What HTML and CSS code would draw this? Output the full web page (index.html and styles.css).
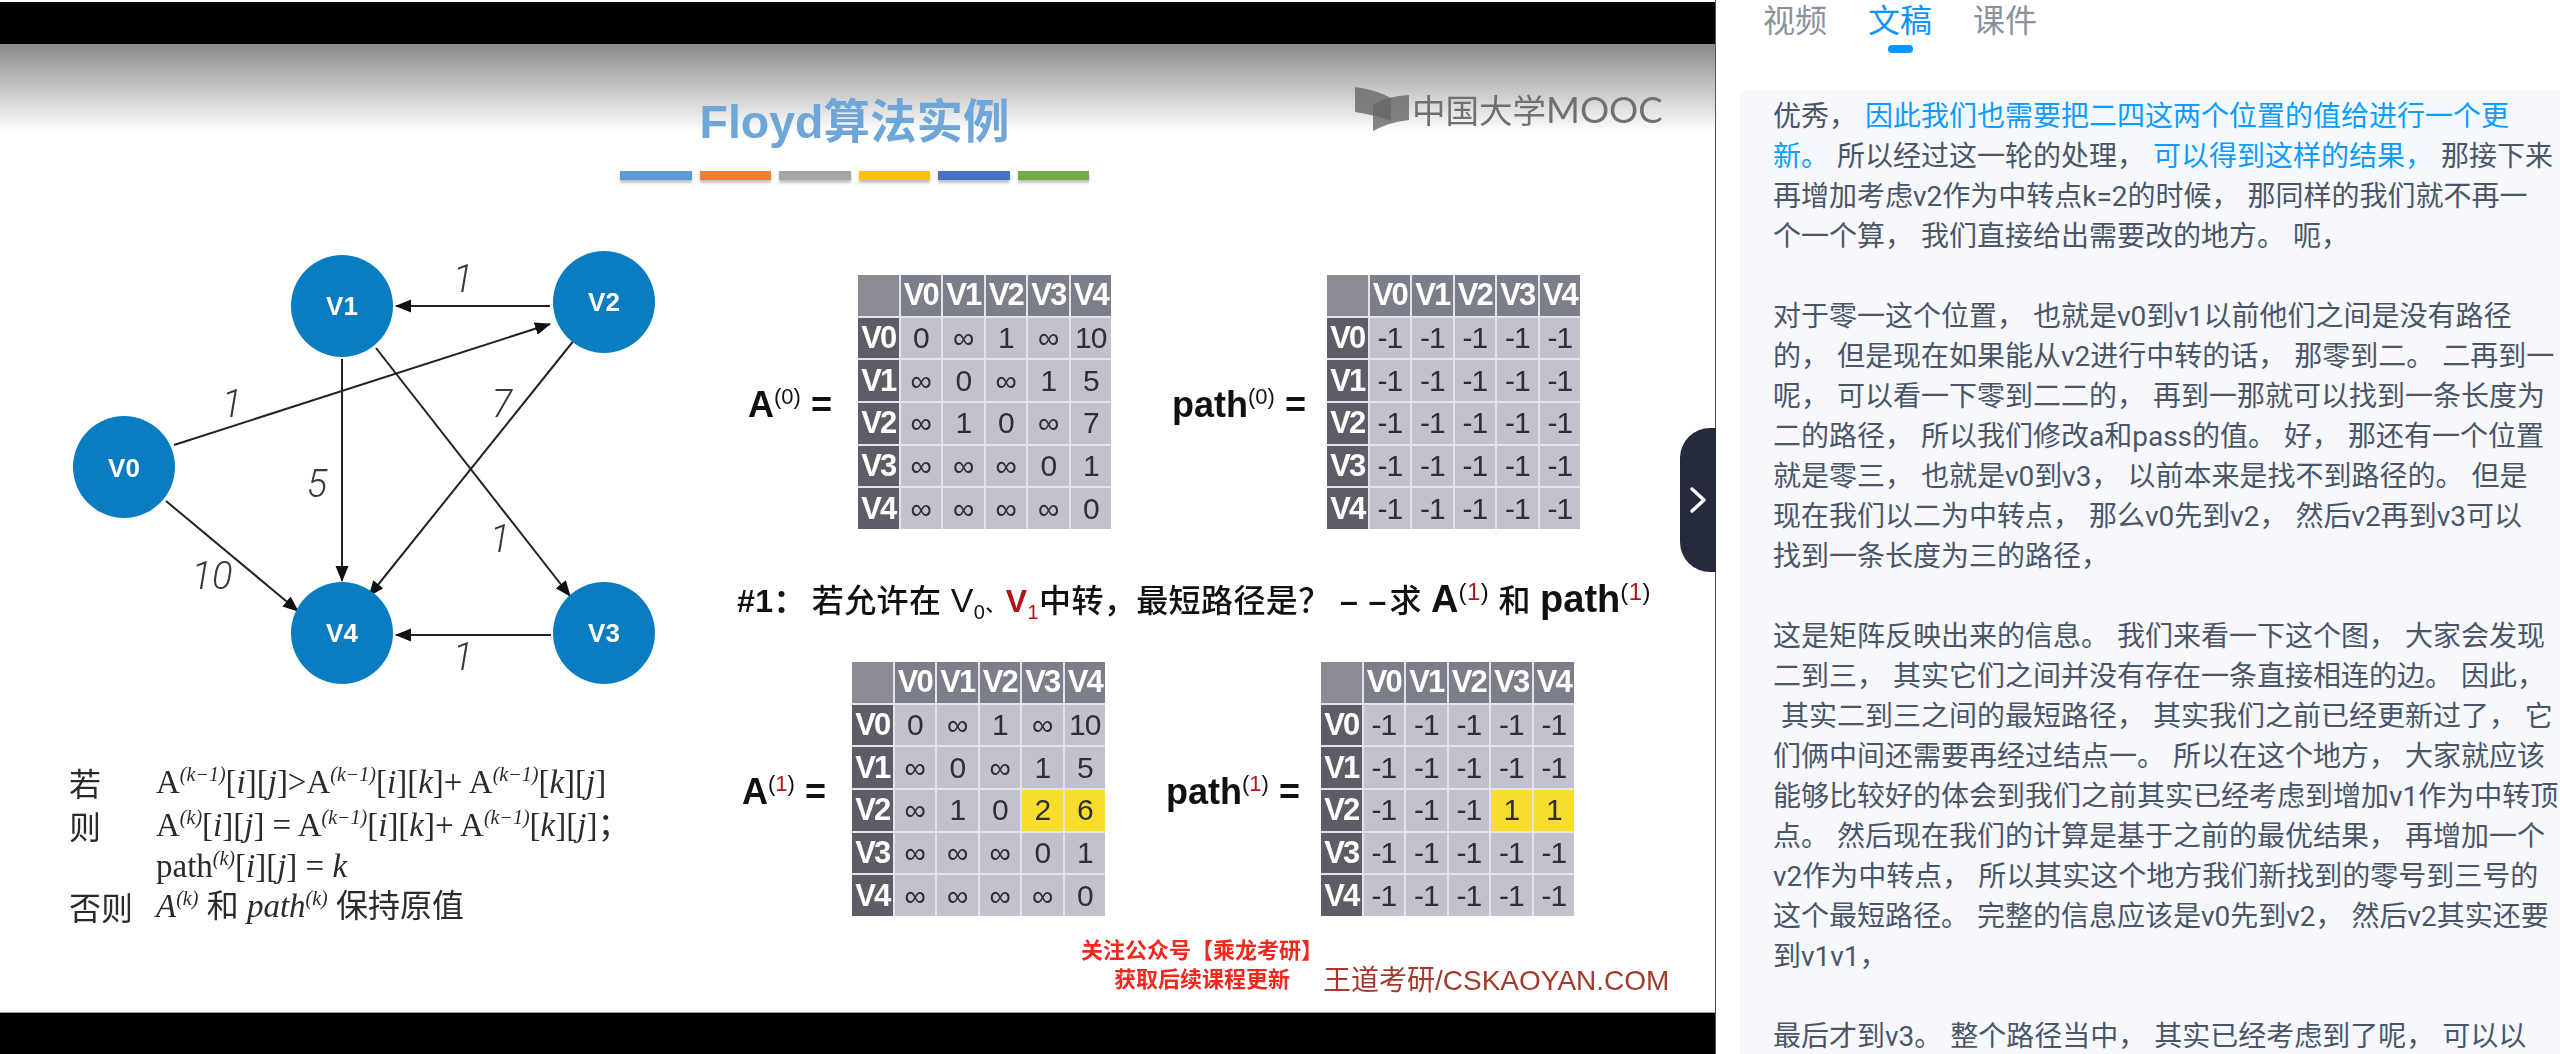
FILE: index.html
```html
<!DOCTYPE html>
<html lang="zh-CN">
<head>
<meta charset="utf-8">
<title>Floyd算法实例</title>
<link rel="stylesheet" href="styles.css">
</head>
<body>
<div class="app">
  <section class="video">
    <div class="bar-top"></div>
    <div class="slide">
      <header class="slide-head">
        <div class="title-block">
          <h1 class="title">Floyd算法实例</h1>
          <div class="dashes"><i class="d1"></i><i class="d2"></i><i class="d3"></i><i class="d4"></i><i class="d5"></i><i class="d6"></i></div>
        </div>
        <div class="logo">
          <svg class="logo-mark" width="54" height="44" viewBox="0 0 54 44"><path class="pg" d="M0 0Q22 3 36 11V34Q20 28 0 25Z"/><path class="pg" d="M18 18Q32 9 54 8V33Q34 35 18 44Z"/></svg>
          <span class="logo-text">中国大学<span class="logo-latin">MOOC</span></span>
        </div>
      </header>
      <div class="slide-body">
        <div class="left">
          <svg class="graph" width="720" height="460" viewBox="0 250 720 460">
            <defs><marker id="ah" markerUnits="userSpaceOnUse" markerWidth="16" markerHeight="14" refX="15" refY="6.5" orient="auto"><path class="head" d="M0 0L16 6.5L0 13Z"/></marker></defs>
            <g class="edges">
              <line x1="550" y1="306" x2="396" y2="306" marker-end="url(#ah)"/>
              <line x1="174" y1="445" x2="550" y2="324" marker-end="url(#ah)"/>
              <line x1="342" y1="359" x2="342" y2="581" marker-end="url(#ah)"/>
              <line x1="376" y1="348" x2="570" y2="596" marker-end="url(#ah)"/>
              <line x1="575" y1="339" x2="369" y2="596" marker-end="url(#ah)"/>
              <line x1="166" y1="501" x2="298" y2="611" marker-end="url(#ah)"/>
              <line x1="551" y1="635" x2="396" y2="635" marker-end="url(#ah)"/>
            </g>
            <g class="nodes">
              <circle cx="342" cy="306" r="51"/><circle cx="604" cy="302" r="51"/><circle cx="124" cy="467" r="51"/><circle cx="342" cy="633" r="51"/><circle cx="604" cy="633" r="51"/>
            </g>
            <g class="node-labels">
              <text x="342" y="315">V1</text><text x="604" y="311">V2</text><text x="124" y="477">V0</text><text x="342" y="642">V4</text><text x="604" y="642">V3</text>
            </g>
            <g class="weights">
              <text x="463" y="292">1</text><text x="232" y="417">1</text><text x="317" y="497">5</text><text x="502" y="417">7</text><text x="500" y="552">1</text><text x="212" y="589">10</text><text x="463" y="670">1</text>
            </g>
          </svg>
          <div class="formula">
            <span class="kw">若</span><span class="fx">A<sup><em>(k−1)</em></sup>[<em>i</em>][<em>j</em>]&gt;A<sup><em>(k−1)</em></sup>[<em>i</em>][<em>k</em>]+ A<sup><em>(k−1)</em></sup>[<em>k</em>][<em>j</em>]</span>
            <span class="kw">则</span><span class="fx">A<sup><em>(k)</em></sup>[<em>i</em>][<em>j</em>] = A<sup><em>(k−1)</em></sup>[<em>i</em>][<em>k</em>]+ A<sup><em>(k−1)</em></sup>[<em>k</em>][<em>j</em>]；</span>
            <span class="kw"></span><span class="fx">path<sup><em>(k)</em></sup>[<em>i</em>][<em>j</em>] = <em>k</em></span>
            <span class="kw">否则</span><span class="fx"><em>A<sup>(k)</sup></em> <span class="cjk">和</span> <em>path<sup>(k)</sup></em> <span class="cjk">保持原值</span></span>
          </div>
        </div>
        <div class="right">
          <div class="mrow">
            <div class="mlabel la">A<sup>(0)</sup> =</div>
            <div class="matrix"><span class="c"></span><span class="h">V0</span><span class="h">V1</span><span class="h">V2</span><span class="h">V3</span><span class="h">V4</span><span class="r">V0</span><span>0</span><span>∞</span><span>1</span><span>∞</span><span>10</span><span class="r">V1</span><span>∞</span><span>0</span><span>∞</span><span>1</span><span>5</span><span class="r">V2</span><span>∞</span><span>1</span><span>0</span><span>∞</span><span>7</span><span class="r">V3</span><span>∞</span><span>∞</span><span>∞</span><span>0</span><span>1</span><span class="r">V4</span><span>∞</span><span>∞</span><span>∞</span><span>∞</span><span>0</span></div>
            <div class="mlabel lp">path<sup>(0)</sup> =</div>
            <div class="matrix"><span class="c"></span><span class="h">V0</span><span class="h">V1</span><span class="h">V2</span><span class="h">V3</span><span class="h">V4</span><span class="r">V0</span><span>-1</span><span>-1</span><span>-1</span><span>-1</span><span>-1</span><span class="r">V1</span><span>-1</span><span>-1</span><span>-1</span><span>-1</span><span>-1</span><span class="r">V2</span><span>-1</span><span>-1</span><span>-1</span><span>-1</span><span>-1</span><span class="r">V3</span><span>-1</span><span>-1</span><span>-1</span><span>-1</span><span>-1</span><span class="r">V4</span><span>-1</span><span>-1</span><span>-1</span><span>-1</span><span>-1</span></div>
          </div>
          <p class="question"><b class="num">#1：</b>若允许在 <span class="vv">V</span><sub>0</sub><span class="dun">、</span><b class="red">V<sub>1</sub></b>中转，最短路径是？ <b class="dash">– –</b>求 <b class="big">A</b><sup>(<span class="red">1</span>)</sup> 和 <b class="big">path</b><sup>(<span class="red">1</span>)</sup></p>
          <div class="mrow second">
            <div class="mlabel la">A<sup>(<span class="red">1</span>)</sup> =</div>
            <div class="matrix"><span class="c"></span><span class="h">V0</span><span class="h">V1</span><span class="h">V2</span><span class="h">V3</span><span class="h">V4</span><span class="r">V0</span><span>0</span><span>∞</span><span>1</span><span>∞</span><span>10</span><span class="r">V1</span><span>∞</span><span>0</span><span>∞</span><span>1</span><span>5</span><span class="r">V2</span><span>∞</span><span>1</span><span>0</span><span class="y">2</span><span class="y">6</span><span class="r">V3</span><span>∞</span><span>∞</span><span>∞</span><span>0</span><span>1</span><span class="r">V4</span><span>∞</span><span>∞</span><span>∞</span><span>∞</span><span>0</span></div>
            <div class="mlabel lp">path<sup>(<span class="red">1</span>)</sup> =</div>
            <div class="matrix"><span class="c"></span><span class="h">V0</span><span class="h">V1</span><span class="h">V2</span><span class="h">V3</span><span class="h">V4</span><span class="r">V0</span><span>-1</span><span>-1</span><span>-1</span><span>-1</span><span>-1</span><span class="r">V1</span><span>-1</span><span>-1</span><span>-1</span><span>-1</span><span>-1</span><span class="r">V2</span><span>-1</span><span>-1</span><span>-1</span><span class="y">1</span><span class="y">1</span><span class="r">V3</span><span>-1</span><span>-1</span><span>-1</span><span>-1</span><span>-1</span><span class="r">V4</span><span>-1</span><span>-1</span><span>-1</span><span>-1</span><span>-1</span></div>
          </div>
          <div class="credits">
            <div class="promo"><div>关注公众号【乘龙考研】</div><div class="promo2">获取后续课程更新</div></div>
            <div class="brand">王道考研/CSKAOYAN.COM</div>
          </div>
        </div>
      </div>
    </div>
    <div class="bar-bottom"></div>
    <button class="toggle" aria-label="收起"><svg width="16" height="26" viewBox="0 0 16 26"><path d="M2 2L14 13L2 24"/></svg></button>
  </section>
  <aside class="panel">
    <nav class="tabs">
      <a class="tab">视频</a>
      <a class="tab active">文稿</a>
      <a class="tab">课件</a>
    </nav>
    <div class="transcript">
      <p>优秀， <span class="hl">因此我们也需要把二四这两个位置的值给进行一个更<br>新。</span> 所以经过这一轮的处理， <span class="hl">可以得到这样的结果，</span> 那接下来<br>再增加考虑v2作为中转点k=2的时候， 那同样的我们就不再一<br>个一个算， 我们直接给出需要改的地方。 呃，</p>
      <p>对于零一这个位置， 也就是v0到v1以前他们之间是没有路径<br>的， 但是现在如果能从v2进行中转的话， 那零到二。 二再到一<br>呢， 可以看一下零到二二的， 再到一那就可以找到一条长度为<br>二的路径， 所以我们修改a和pass的值。 好， 那还有一个位置<br>就是零三， 也就是v0到v3， 以前本来是找不到路径的。 但是<br>现在我们以二为中转点， 那么v0先到v2， 然后v2再到v3可以<br>找到一条长度为三的路径，</p>
      <p>这是矩阵反映出来的信息。 我们来看一下这个图， 大家会发现<br>二到三， 其实它们之间并没有存在一条直接相连的边。 因此，<br>&nbsp;其实二到三之间的最短路径， 其实我们之前已经更新过了， 它<br>们俩中间还需要再经过结点一。 所以在这个地方， 大家就应该<br>能够比较好的体会到我们之前其实已经考虑到增加v1作为中转顶<br>点。 然后现在我们的计算是基于之前的最优结果， 再增加一个<br>v2作为中转点， 所以其实这个地方我们新找到的零号到三号的<br>这个最短路径。 完整的信息应该是v0先到v2， 然后v2其实还要<br>到v1v1，</p>
      <p>最后才到v3。 整个路径当中， 其实已经考虑到了呢， 可以以<br>v0，v1这些顶点作为中转的情况。 这个地方可以相相他会一下</p>
    </div>
  </aside>
</div>
</body>
</html>
```
FILE: styles.css
```css
* { box-sizing: border-box; }
html, body { margin: 0; height: 100%; background: #fff; overflow: hidden; }
body { font-family: "Liberation Sans", "Noto Sans CJK SC", sans-serif; }
.app { display: flex; height: 1054px; width: 2560px; }

/* video column */
.video { position: relative; width: 1716px; height: 1054px; padding-top: 2px; display: flex; flex-direction: column; border-right: 1px solid #555; }
.bar-top { height: 42px; background: #000; }
.bar-bottom { flex: 1; background: #000; border-top: 1px solid #999; }
.slide { height: 968px; background: linear-gradient(#8a8a8a 0, #fff 88px); filter: blur(.5px); overflow: hidden; }

.slide-head { height: 206px; display: flex; }
.title-block { margin-left: 620px; width: 469px; padding-top: 50px; }
.title { margin: 0; font-size: 46.5px; line-height: 56px; font-weight: 700; text-align: center; color: #6ea6d9; font-family: "Liberation Sans", "Noto Sans CJK SC", sans-serif; }
.dashes { display: flex; gap: 8px; margin-top: 21px; }
.dashes i { flex: 1; height: 9px; box-shadow: 0 3px 3px rgba(0,0,0,.25); }
.d1 { background: #5b9bd5; } .d2 { background: #ed7d31; } .d3 { background: #a5a5a5; }
.d4 { background: #ffc000; } .d5 { background: #4472c4; } .d6 { background: #70ad47; }

.logo { margin: 43px 0 0 266px; display: flex; align-items: center; height: 44px; gap: 3px; color: #707070; }
.logo-mark { display: block; flex: none; }
.pg { fill: #666; fill-opacity: .8; }
.logo-text { font-family: "Noto Sans CJK SC", sans-serif; font-weight: 400; font-size: 33.5px; line-height: 40px; white-space: nowrap; }
.logo-latin { font: 400 36.5px Lato, "Noto Sans", sans-serif; }

.slide-body { display: flex; }
.left { width: 737px; flex: none; }
.graph { display: block; }
.edges line { stroke: #222; stroke-width: 2; }
.head { fill: #111; }
.nodes circle { fill: #0a7cc1; }
.node-labels text { fill: #fff; font: 700 26px "Liberation Sans", sans-serif; text-anchor: middle; }
.weights text { fill: #3a3a3a; font: italic 300 38px Roboto, "Liberation Sans", sans-serif; text-anchor: middle; }

.formula { display: grid; grid-template-columns: 87px auto; grid-template-rows: 44px 42px 40px 40px; margin: 50px 0 0 69px; align-items: center; color: #2a2a2a; }
.kw { font: 32px/40px "Noto Sans CJK SC", sans-serif; white-space: nowrap; }
.fx { font: 33px/40px "Liberation Serif", "Noto Sans CJK SC", serif; white-space: nowrap; }
.fx sup { font-size: 20px; line-height: 0; }
.fx .cjk { font-size: 32px; }

.right { padding-top: 25px; }
.mrow { display: flex; align-items: center; padding-left: 11px; }
.mrow.second { padding-left: 5px; margin-top: 38px; }
.mlabel { font: 700 36px/40px "Liberation Sans", sans-serif; color: #111; white-space: nowrap; padding-top: 6px; }
.mlabel sup { font-size: 22px; font-weight: 400; line-height: 0; }
.la { width: 110px; }
.lp { width: 155px; margin-left: 61px; }
.matrix { width: 253px; height: 254px; display: grid; grid-template-columns: repeat(6, 1fr); grid-template-rows: repeat(6, 1fr); gap: 2px; background: #e3e3ea; flex: none; }
.matrix span { display: flex; align-items: center; justify-content: center; background: #c1c2cb; color: #2e2e33; font-size: 30px; letter-spacing: -1px; }
.matrix .h, .matrix .r { color: #fff; font-size: 31px; font-weight: 700; letter-spacing: -2px; }
.matrix .h { background: #7c7e8a; }
.matrix .r { background: #5c5d66; }
.matrix .c { background: #8b8c93; }
.matrix .y { background: #f9dd2e; }

.question { margin: 49px 0 0; height: 46px; font: 500 32px/46px "Liberation Sans", "Noto Sans CJK SC", sans-serif; color: #111; white-space: nowrap; letter-spacing: .4px; }
.question b { font-weight: 700; }
.question .num { margin-right: 6px; }
.question .dash { margin: 0 2px 0 0; letter-spacing: 1px; }
.question .vv { font-size: 34px; line-height: 0; }
.question .dun { font-size: 20px; line-height: 0; }
.question .big { font-size: 38px; letter-spacing: 0; line-height: 0; }
.question sub { font-size: 20px; font-weight: 400; line-height: 0; }
.question sup { font-size: 24px; font-weight: 400; line-height: 0; }
.red { color: #b5121b; }

.credits { display: flex; align-items: flex-end; margin: 18px 0 0 344px; }
.promo { font: 700 22px/29px "Noto Sans CJK SC", sans-serif; color: #f0281e; white-space: nowrap; }
.promo2 { margin-left: 33px; }
.brand { margin: 0 0 -4px; font: 28px/30px "Liberation Sans", "Noto Sans CJK SC", sans-serif; color: #a33a2a; white-space: nowrap; }

.toggle { position: absolute; left: 1680px; top: 428px; width: 36px; height: 144px; padding: 0; border: 0; border-radius: 30px 0 0 30px; background: #252b3a; display: flex; align-items: center; justify-content: center; }
.toggle path { fill: none; stroke: #fff; stroke-width: 3.5; stroke-linecap: round; stroke-linejoin: round; }

/* side panel */
.panel { flex: 1; min-width: 0; }
.tabs { height: 90px; padding-left: 47px; display: flex; gap: 41px; align-items: flex-start; }
.tab { position: relative; width: 64px; font: 32px/36px "Noto Sans CJK SC", sans-serif; color: #8b919c; }
.tab.active { color: #0a95ff; }
.tab.active::after { content: ""; position: absolute; left: 20px; top: 45px; width: 25px; height: 8px; border-radius: 4px; background: #0a95ff; }
.transcript { margin-left: 24px; height: 964px; padding: 7px 0 0 33px; background: #f7f8fc; overflow: hidden; font: 28px/40px Roboto, "Noto Sans CJK SC", sans-serif; word-spacing: 1px; color: #4a5568; white-space: nowrap; }
.transcript p { margin: 0 0 40px; }
.hl { color: #0f9bff; background: #f3f9ff; }
```
